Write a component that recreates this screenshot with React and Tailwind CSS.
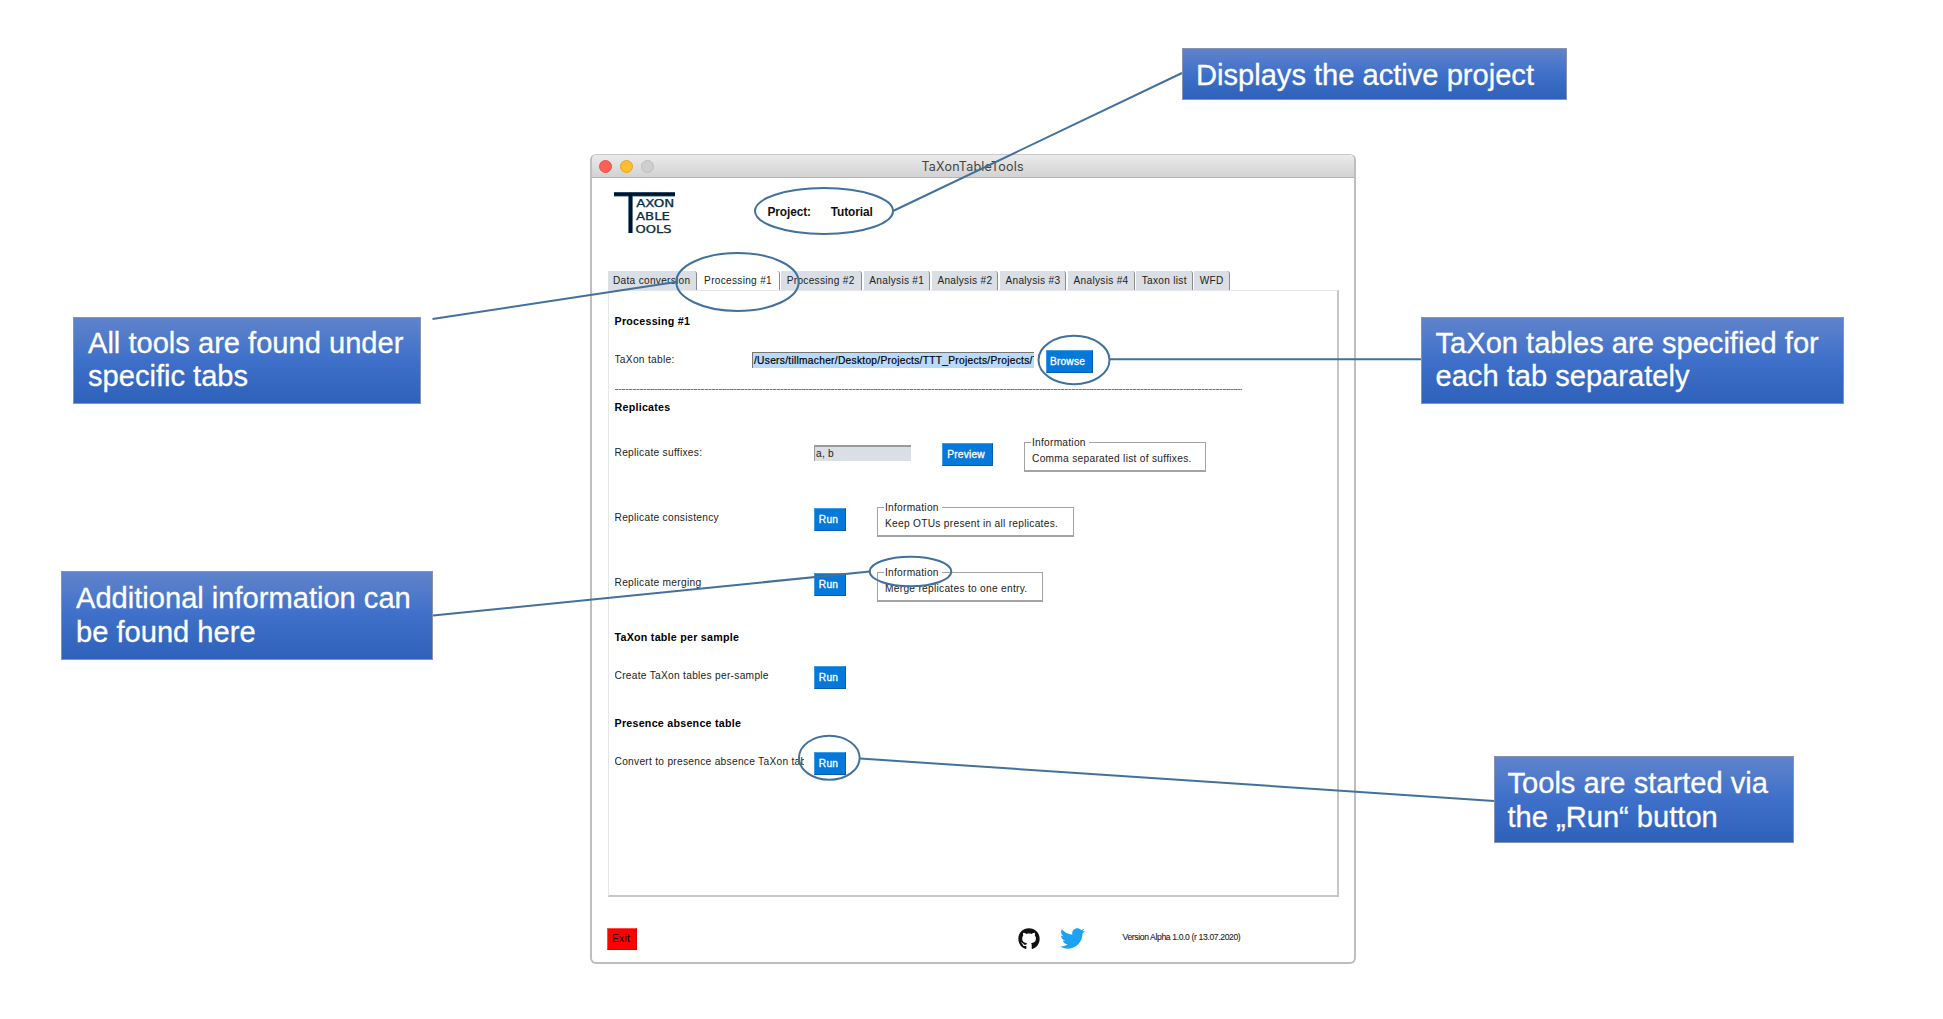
import React from "react";
import { FaGithub, FaTwitter } from "react-icons/fa";

const label = "text-[10.2px] tracking-[0.28px] text-[#222] whitespace-nowrap";

function Heading({ className, children }) {
  return (
    <h2 className={"text-[10.7px] leading-5 font-bold tracking-[0.25px] text-black whitespace-nowrap " + className}>
      {children}
    </h2>
  );
}

function Button({ className, children }) {
  return (
    <button
      className={
        "mt-[1.5px] h-[22.5px] shrink-0 border border-t-[#3d9be9] border-l-[#3d9be9] border-r-[#0560ab] border-b-[#0560ab] bg-[#0479d9] pr-[3px] text-[10.2px] leading-none tracking-[0.2px] text-white [-webkit-text-stroke:0.3px_white] " +
        className
      }
    >
      {children}
    </button>
  );
}

function Row({ className, labelClass, text, children }) {
  return (
    <div className={"flex items-start " + className}>
      <div className={label + " shrink-0 overflow-hidden pt-px leading-5 " + labelClass}>{text}</div>
      {children}
    </div>
  );
}

function Info({ className, children }) {
  return (
    <div className={"relative h-[30px] shrink-0 border border-b-2 border-[#a3a3a3] " + className}>
      <span className="absolute top-[-7px] left-[6px] bg-white pr-[3px] pl-px text-[10.2px] leading-[14px] tracking-[0.25px] text-[#222]">
        Information
      </span>
      <p className={label + " pt-[8px] pl-[7px] leading-[15px]"}>{children}</p>
    </div>
  );
}

const tabs = [
  ["Data conversion", "w-[89.5px]"],
  ["Processing #1", "w-[81px]"],
  ["Processing #2", "w-[81px]"],
  ["Analysis #1", "w-[66.5px]"],
  ["Analysis #2", "w-[66.5px]"],
  ["Analysis #3", "w-[66.5px]"],
  ["Analysis #4", "w-[66.5px]"],
  ["Taxon list", "w-[56.5px]"],
  ["WFD", "w-[35.5px]"],
];

function Callout({ className, children }) {
  return (
    <div
      className={
        "absolute flex items-center border border-[#8793b0] bg-linear-to-b from-[#6083cb] via-[#3e70ca] to-[#2e61ba] text-[29.1px] leading-[33.3px] whitespace-nowrap text-white [-webkit-text-stroke:0.3px_white] " +
        className
      }
    >
      <p>{children}</p>
    </div>
  );
}

function Logo() {
  return (
    <svg width="64" height="44" viewBox="612 190 64 44" className="shrink-0">
      <path d="M614 194.2h61M630.5 194v39" stroke="#2d6085" strokeWidth="4.6" />
      <path d="M614 194.2h61M630.5 194v39" stroke="#04101c" strokeWidth="3" />
      <g fill="#0c2a44" stroke="#0c2a44" strokeWidth="0.25" fontFamily="'DejaVu Sans'" fontSize="9.6">
        <text x="636.2" y="207" textLength="38" lengthAdjust="spacingAndGlyphs">AXON</text>
        <text x="636" y="220" textLength="34" lengthAdjust="spacingAndGlyphs">ABLE</text>
        <text x="635.6" y="232.7" textLength="36" lengthAdjust="spacingAndGlyphs">OOLS</text>
      </g>
    </svg>
  );
}

export default function App() {
  return (
    <div className="relative h-[1019px] w-[1943px] overflow-hidden bg-white pt-[154px] pl-[590px] font-['Liberation_Sans',Arial,sans-serif]">
      <main className="h-[810px] w-[766px] rounded-[6px] border-t border-r-2 border-b-2 border-l-2 border-[#bebebe] border-t-[#c9c9c9] bg-white">
        <header className="flex h-[23px] items-center rounded-t-[5px] border-b border-[#b4b4b4] bg-linear-to-b from-[#ebebeb] to-[#d2d2d2] pl-[7px]">
          <div className="flex w-[322.5px] gap-[8px]">
            <span className="size-[13px] rounded-full border border-[#e8504a] bg-[#ff5f57]" />
            <span className="size-[13px] rounded-full border border-[#e2a52c] bg-[#fdbd2e]" />
            <span className="size-[13px] rounded-full border border-[#bdbdbd] bg-[#cecece]" />
          </div>
          <h1 className="pt-[2px] font-[Inter,sans-serif] text-[12.5px] tracking-[0.2px] text-[#444]">TaXonTableTools</h1>
        </header>

        <div className="flex h-[93px] pt-[12px] pl-[20px]">
          <Logo />
          <p className="ml-[91.5px] pt-[14px] text-[11.9px] leading-[16px] font-bold tracking-[-0.12px] text-[#111]">Project:</p>
          <p className="ml-[20px] pt-[14px] text-[11.9px] leading-[16px] font-bold tracking-[-0.12px] text-[#111]">Tutorial</p>
        </div>

        <nav className="flex h-[18.5px] gap-[1.6px] pl-[15.5px]">
          {tabs.map(([name, width], i) => (
            <div
              key={name}
              className={
                "shrink-0 rounded-tr-[3px] border-r border-[#8b8b8b] pl-[5.5px] text-[10.1px] leading-[20px] tracking-[0.3px] whitespace-nowrap text-[#222] " +
                width +
                (i === 1 ? " bg-white" : " bg-[#d9dfe5]")
              }
            >
              {name}
            </div>
          ))}
        </nav>

        <section className="ml-[15.5px] h-[607.5px] w-[731.5px] border border-t-[#e6e6e6] border-r-2 border-r-[#c6c6c6] border-b-2 border-b-[#c6c6c6] border-l-[#e6e6e6] pt-[20.8px] pl-[6px]">
          <Heading className="h-[37.7px]">Processing #1</Heading>
          <Row className="h-[38px]" labelClass="w-[137.5px]" text="TaXon table:">
            <div className="mt-[3.5px] h-[15.5px] w-[281.5px] shrink-0 overflow-hidden border-t border-l border-[#777] bg-[#b9dafb] pl-px text-[10.2px] leading-[16px] tracking-[0.29px] whitespace-nowrap text-black [-webkit-text-stroke:0.2px_black]">
              /Users/tillmacher/Desktop/Projects/TTT_Projects/Projects/T
            </div>
            <Button className="ml-[12px] w-[47px]">Browse</Button>
          </Row>
          <div className="h-[10px] w-[627px] pt-[2px]">
            <div className="h-px bg-[repeating-linear-gradient(90deg,#777_0_2.6px,#b5b5b5_2.6px_3.6px)]" />
          </div>
          <Heading className="h-[45px]">Replicates</Heading>
          <Row className="h-[65px]" labelClass="w-[199.5px]" text="Replicate suffixes:">
            <div className="mt-[3.5px] h-[15.5px] w-[97px] shrink-0 border-t-2 border-l border-[#9a9a9a] bg-[#d9dfe5] pl-px text-[10.2px] leading-[14px] tracking-[0.25px] text-[#222]">
              a, b
            </div>
            <Button className="ml-[31px] w-[51px]">Preview</Button>
            <Info className="ml-[31px] w-[182px]">Comma separated list of suffixes.</Info>
          </Row>
          <Row className="h-[65px]" labelClass="w-[199.5px]" text="Replicate consistency">
            <Button className="w-[32px]">Run</Button>
            <Info className="ml-[31px] w-[197px]">Keep OTUs present in all replicates.</Info>
          </Row>
          <Row className="h-[55px]" labelClass="w-[199.5px]" text="Replicate merging">
            <Button className="w-[32px]">Run</Button>
            <Info className="ml-[31px] w-[166px]">Merge replicates to one entry.</Info>
          </Row>
          <Heading className="h-[38px]">TaXon table per sample</Heading>
          <Row className="h-[48px]" labelClass="w-[199.5px]" text="Create TaXon tables per-sample">
            <Button className="w-[32px]">Run</Button>
          </Row>
          <Heading className="h-[38px]">Presence absence table</Heading>
          <Row className="h-[30px]" labelClass="w-[189px] mr-[10.5px]" text="Convert to presence absence TaXon table">
            <Button className="w-[32px]">Run</Button>
          </Row>
        </section>

        <footer className="flex items-start pt-[30.5px] pl-[15px]">
          <button className="h-[22.5px] w-[30px] border border-t-[#ff4a4a] border-r-[#d00] border-b-[#d00] border-l-[#ff4a4a] bg-[#fe0000] pr-[2px] text-[10.2px] leading-none tracking-[0.25px] text-black">
            Exit
          </button>
          <FaGithub className="ml-[381px] size-[22px] text-[#111]" />
          <FaTwitter className="-mt-[1.5px] ml-[19.5px] size-[25px] text-[#1da1f2]" />
          <p className="ml-[38px] pt-[3.5px] text-[8.6px] leading-3 tracking-[-0.37px] whitespace-nowrap text-[#222] [-webkit-text-stroke:0.1px_#222]">Version Alpha 1.0.0 (r 13.07.2020)</p>
        </footer>
      </main>

      <svg className="absolute inset-0" width="1943" height="1019" fill="none" stroke="#41719c" strokeWidth="2">
        <ellipse cx="824" cy="211" rx="69" ry="23" />
        <ellipse cx="737.5" cy="282" rx="61.2" ry="29" />
        <ellipse cx="1074" cy="360" rx="35.5" ry="24.2" />
        <ellipse cx="910.5" cy="571.5" rx="40.8" ry="14.8" />
        <ellipse cx="829.3" cy="757.8" rx="30.3" ry="22" />
        <path d="M893 211 1182 73M432.5 319 676 282M1110 359.2H1422M433 615.5 870 571.5M860 758.5 1494 801" />
      </svg>

      <Callout className="top-[48px] left-[1181.5px] h-[51.5px] w-[385px] pt-[3.5px] pl-[13.5px]">Displays the active project</Callout>
      <Callout className="top-[316.5px] left-[73px] h-[87px] w-[347.5px] pl-[14px]">
        All tools are found under<br />specific tabs
      </Callout>
      <Callout className="top-[571px] left-[61px] h-[89px] w-[372px] pl-[14px]">
        Additional information can<br />be found here
      </Callout>
      <Callout className="top-[316.5px] left-[1421px] h-[87px] w-[422.5px] pl-[13.5px]">
        TaXon tables are specified for<br />each tab separately
      </Callout>
      <Callout className="top-[756px] left-[1493.5px] h-[87px] w-[300px] pt-[2px] pl-[13px]">
        Tools are started via<br />the „Run“ button
      </Callout>
    </div>
  );
}
